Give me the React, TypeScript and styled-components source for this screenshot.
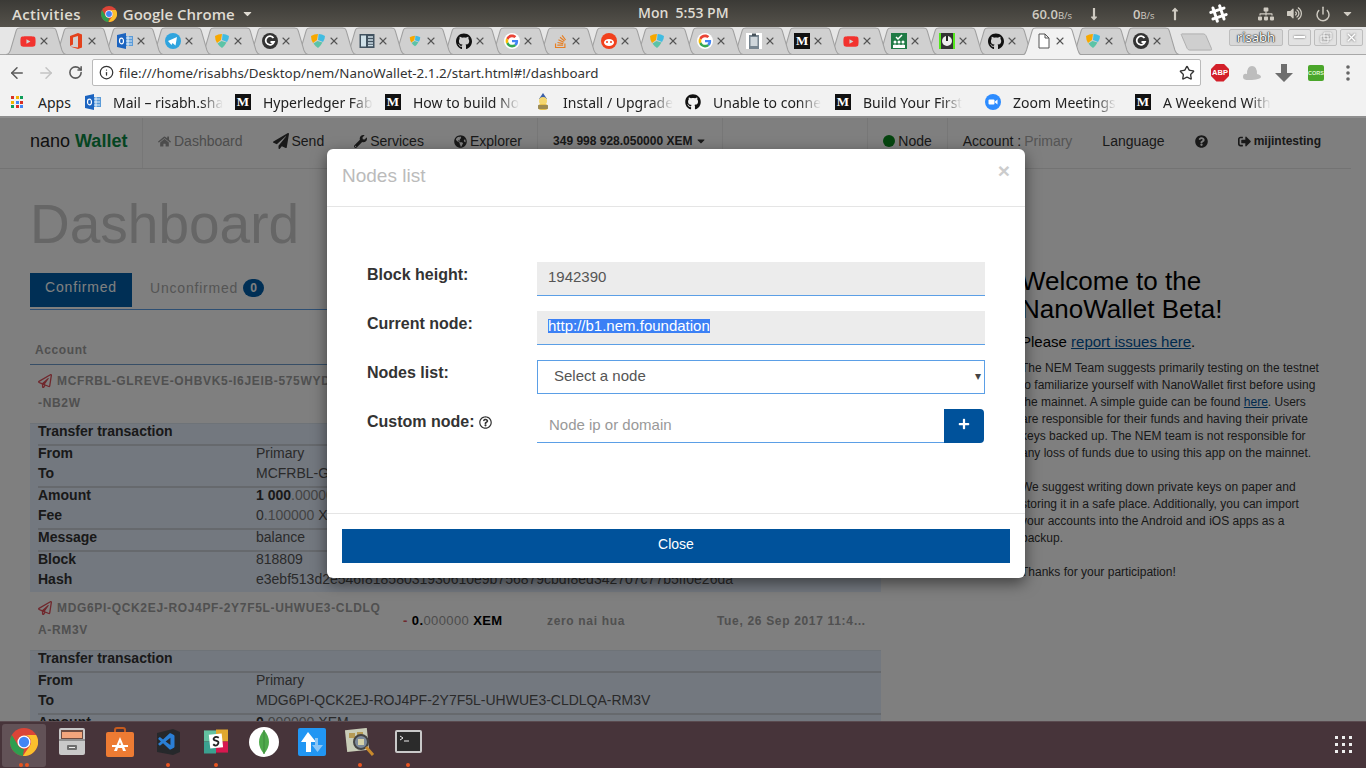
import { FC, ReactNode } from 'react';
import styled, { createGlobalStyle } from 'styled-components';
import { ArrowLeft, ArrowRight, Info, Power, RotateCw, Star, X } from 'lucide-react';
import {
    FaGithub, FaGlobeAmericas, FaHome, FaPaperPlane, FaPlus, FaQuestionCircle,
    FaRegPaperPlane, FaRegQuestionCircle, FaSignOutAlt, FaSlackHash, FaStackOverflow,
    FaWrench, FaYoutube, FaCaretDown, FaLongArrowAltDown, FaLongArrowAltUp, FaVolumeUp,
    FaSitemap,
} from 'react-icons/fa';
import { VscVscode } from 'react-icons/vsc';

const GlobalStyle = createGlobalStyle`
    html, body { margin: 0; padding: 0; overflow: hidden; background: #808080; }
    * { box-sizing: border-box; }
    body { font-family: "Liberation Sans", Arial, sans-serif; }
`;

const Screen = styled.div`
    width: 1366px;
    height: 768px;
    display: flex;
    flex-direction: column;
    overflow: hidden;
`;

/* ---------- gnome panel ---------- */

const Panel = styled.div`
    height: 27px;
    flex: none;
    display: flex;
    align-items: center;
    position: relative;
    padding-left: 12px;
    background: linear-gradient(#3b3a36, #55524b);
    color: #dfdbd2;
    font: 600 15px "Open Sans", "Noto Sans", sans-serif;
    letter-spacing: 0.3px;
`;

const PanelApp = styled.div`
    display: flex;
    align-items: center;
    margin-left: 20px;
    gap: 6px;
    letter-spacing: 0;
`;

const Clock = styled.div`
    position: absolute;
    left: 638px;
    top: 3px;
    font-size: 14px;
    letter-spacing: 0;
`;

const PanelTray = styled.div`
    margin-left: auto;
    width: 334px;
    display: grid;
    grid-template-columns: 55px 46px 35px 40px 50px 29px 28px 26px 25px;
    align-items: center;
    justify-items: start;
    color: #cfcbc2;
`;

const Speed = styled.span`
    font-size: 13px;
    letter-spacing: 0;
    white-space: nowrap;
    & small { font-size: 9.5px; font-weight: 400; }
`;

/* ---------- chrome tabs ---------- */

const TabStrip = styled.div`
    height: 28px;
    flex: none;
    display: flex;
    padding-left: 6px;
    background: #e6e6e6;
    box-shadow: inset 0 -1px 0 #a8a8a8;
    position: relative;
`;

const Tab = styled.div<{ $z: number }>`
    width: 60.4px;
    height: 28px;
    margin-right: -12px;
    flex: none;
    position: relative;
    z-index: ${(p) => p.$z};
    display: flex;
    align-items: center;
    padding: 0 0 0 14px;
    gap: 2px;
`;

const TabShape = styled.svg`
    position: absolute;
    left: 0;
    top: 0;
    width: 100%;
    height: 100%;
`;

const TabIconBox = styled.span`
    position: relative;
    width: 16px;
    height: 16px;
    flex: none;
    display: flex;
    align-items: center;
    justify-content: center;
`;

const TabClose = styled(X)`
    position: relative;
    flex: none;
    color: #555;
`;

const NewTab = styled.svg`
    flex: none;
    width: 34px;
    height: 18px;
    margin: 6px 0 0 13px;
`;

const WindowControls = styled.div`
    margin-left: auto;
    padding: 2px 3px 0 0;
    display: flex;
    gap: 3px;
    position: relative;
    z-index: 40;
`;

const ProfileChip = styled.div`
    width: 54px;
    height: 17px;
    margin-right: 2px;
    border: 1px solid #bdbdbd;
    border-radius: 2px;
    background: #d8d8d8;
    color: #fff;
    font: 13px "Noto Sans", sans-serif;
    line-height: 15px;
    text-align: center;
    text-shadow: 0 0 1px #111, 0 0 1px #111, 0 0 2px #333;
`;

const WindowButton = styled.div`
    width: 23px;
    height: 17px;
    border: 1px solid #bdbdbd;
    border-radius: 2px;
    background: #e2e2e2;
    color: #fff;
    display: flex;
    align-items: center;
    justify-content: center;
    & svg { filter: drop-shadow(0 0 1px #666); }
`;

/* ---------- chrome toolbar ---------- */

const Toolbar = styled.div`
    height: 35px;
    flex: none;
    display: flex;
    align-items: center;
    background: #f2f2f2;
    padding: 0 0 0 8px;
    color: #5a5a5a;
`;

const ToolButton = styled.span<{ $faded?: boolean }>`
    width: 18px;
    margin-right: 11px;
    display: flex;
    justify-content: center;
    flex: none;
    color: ${(p) => (p.$faded ? '#c4c4c4' : '#5a5a5a')};
`;

const Omnibox = styled.div`
    width: 1109px;
    height: 27px;
    margin-left: -3px;
    flex: none;
    display: flex;
    align-items: center;
    padding: 0 5px 0 6px;
    gap: 5px;
    background: #fff;
    border: 1px solid #bababa;
    border-radius: 2px;
    font: 13.4px "Noto Sans", sans-serif;
    color: #333;
`;

const Url = styled.span`
    flex: 1;
    white-space: nowrap;
`;

const Extensions = styled.div`
    display: grid;
    grid-template-columns: repeat(5, 32px);
    justify-items: center;
    align-items: center;
    margin-left: 3px;
`;

const AbpBadge = styled.span`
    width: 18px;
    height: 18px;
    background: #d3202a;
    clip-path: polygon(30% 0, 70% 0, 100% 30%, 100% 70%, 70% 100%, 30% 100%, 0 70%, 0 30%);
    color: #fff;
    font: bold 7.5px/18px "Liberation Sans", sans-serif;
    text-align: center;
`;

const CorsBadge = styled.span`
    width: 16px;
    height: 16px;
    background: #4aa62a;
    border-radius: 2px;
    color: #dff5d0;
    font: bold 5.5px/16px "Liberation Sans", sans-serif;
    text-align: center;
`;

/* ---------- bookmarks ---------- */

const BookmarkBar = styled.div`
    height: 28px;
    flex: none;
    display: flex;
    align-items: center;
    padding: 0 0 2px 11px;
    background: #f2f2f2;
    border-bottom: 2px solid #8f8f8f;
    font: 14px "Noto Sans", sans-serif;
    color: #222;
`;

const Bookmark = styled.div<{ $w: number }>`
    width: ${(p) => p.$w}px;
    flex: none;
    display: flex;
    align-items: center;
    gap: 12px;
`;

const BookmarkLabel = styled.span<{ $fade?: boolean }>`
    white-space: nowrap;
    ${(p) => p.$fade && 'mask-image: linear-gradient(90deg, #000 80%, transparent 100%);'}
`;

const AppsGrid = styled.span`
    width: 12px;
    height: 12px;
    margin-right: 3px;
    display: grid;
    grid-template-columns: repeat(3, 3px);
    grid-auto-rows: 3px;
    gap: 1.5px;
`;

const AppsDot = styled.i<{ $c: string }>`
    background: ${(p) => p.$c};
`;

const MediumMark = styled.span`
    width: 16px;
    height: 16px;
    flex: none;
    background: #111;
    color: #fff;
    font: bold 13px/16px "Liberation Serif", serif;
    text-align: center;
`;

/* ---------- page in the browser ---------- */

const Viewport = styled.div`
    height: 603px;
    flex: none;
    position: relative;
    overflow: hidden;
    background: #fff;
`;

const Navbar = styled.nav`
    width: 1351px;
    height: 51px;
    padding-right: 15px;
    display: flex;
    border-bottom: 1px solid #e6e6e6;
    font-size: 14px;
    color: #333;
`;

const Brand = styled.div`
    width: 143px;
    padding-left: 30px;
    font-size: 18px;
    line-height: 47px;
    color: #222;
    border-right: 1px solid #eee;
    & b { color: #0b8a45; }
`;

const NavItem = styled.div<{ $muted?: boolean; $bold?: boolean; $divider?: boolean; $push?: boolean }>`
    padding: 0 15px;
    display: flex;
    align-items: center;
    gap: 3px;
    height: 46px;
    white-space: nowrap;
    color: ${(p) => (p.$muted ? '#999' : '#333')};
    font-weight: ${(p) => (p.$bold ? 700 : 400)};
    font-size: ${(p) => (p.$bold ? '12px' : '14px')};
    ${(p) => p.$divider && 'border-left: 1px solid #eee; border-right: 1px solid #eee;'}
    ${(p) => p.$push && 'margin-left: auto;'}
    & em { font-style: normal; color: #aaa; }
`;

const NodeDot = styled.span`
    width: 12px;
    height: 12px;
    border-radius: 50%;
    background: #0a8a1e;
`;

const Main = styled.div`
    display: flex;
    padding-left: 30px;
`;

const LeftColumn = styled.div`
    width: 851px;
    flex: none;
`;

const PageTitle = styled.h1`
    margin: 25px 0 19px;
    font-size: 55px;
    line-height: 60px;
    font-weight: 400;
    color: #ccc;
`;

const TabsRow = styled.div`
    display: flex;
    height: 37px;
    border-bottom: 1px solid #5d9fe6;
    padding-bottom: 2px;
    font-size: 14px;
    letter-spacing: 0.8px;
    line-height: 28px;
`;

const ConfirmedTab = styled.div`
    width: 102px;
    text-align: center;
    background: #005fab;
    color: #fff;
`;

const UnconfirmedTab = styled.div`
    margin-left: 18px;
    display: flex;
    align-items: center;
    gap: 5px;
    color: #aaa;
    height: 30px;
`;

const CountBadge = styled.span`
    width: 21px;
    height: 18px;
    border-radius: 9px;
    background: #005fab;
    color: #fff;
    font: bold 12px/18px "Liberation Sans", sans-serif;
    letter-spacing: 0;
    text-align: center;
`;

const TableHead = styled.div`
    height: 55px;
    padding: 33px 0 0 5px;
    border-bottom: 1px solid #6f9ccd;
    font-size: 12px;
    line-height: 14px;
    font-weight: 700;
    letter-spacing: 0.6px;
    color: #a0a0a0;
`;

const TxRow = styled.div`
    height: 58px;
    display: grid;
    grid-template-columns: 365px 144px 170px 172px;
    align-items: center;
    font-size: 12px;
    font-weight: 700;
    letter-spacing: 0.67px;
    color: #a0a0a0;
`;

const TxAddress = styled.div`
    display: flex;
    flex-direction: column;
    padding: 0 0 4px 8px;
    line-height: 22px;
    white-space: nowrap;
`;

const TxLine = styled.span`
    display: flex;
    align-items: center;
    gap: 5px;
    & svg { color: #e0505a; flex: none; }
`;

const TxCell = styled.div`
    padding-left: 8px;
    white-space: nowrap;
    overflow: hidden;
`;

const TxDate = styled(TxCell)`
    width: 158px;
    text-overflow: ellipsis;
`;

const AmountText = styled.span`
    display: block;
    padding-bottom: 2px;
    color: #000;
    font-size: 13px;
    letter-spacing: 0.4px;
    & i { font-style: normal; color: #e0505a; }
    & em { font-style: normal; font-weight: 400; color: #999; }
`;

const DetailBlock = styled.div`
    padding-left: 8px;
    background: #e6f0ff;
    border-top: 1px solid #dde6f0;
    font-size: 14px;
    color: #555;
`;

const DetailHead = styled.div`
    height: 20px;
    line-height: 14px;
    font-weight: 700;
    color: #333;
`;

const DetailSection = styled.div`
    border-top: 2px solid #ccd3da;
`;

const DetailRow = styled.div`
    height: 20px;
    line-height: 14px;
    display: grid;
    grid-template-columns: 218px 1fr;
    white-space: nowrap;
    & b { color: #333; }
    & strong { color: #333; }
`;

const FaintDigits = styled.span`
    color: #888;
`;

const RightColumn = styled.aside`
    width: 300px;
    margin-left: 140px;
    padding-top: 98px;
    color: #333;
    font-size: 12px;
    line-height: 17px;
    & a { color: #00549c; text-decoration: underline; }
`;

const WelcomeTitle = styled.h2`
    margin: 0;
    font-size: 26px;
    line-height: 28px;
    font-weight: 400;
    color: #000;
`;

const ReportLine = styled.p`
    margin: 9px 0 8px;
    font-size: 15px;
    line-height: 20px;
    color: #000;
`;

const Notes = styled.p`
    margin: 0 0 17px;
`;

/* ---------- modal ---------- */

const Backdrop = styled.div`
    position: absolute;
    inset: 0;
    background: rgba(0, 0, 0, 0.5);
`;

const Modal = styled.div`
    position: absolute;
    left: 327px;
    top: 31px;
    width: 698px;
    height: 429px;
    background: #fff;
    border-radius: 6px;
    box-shadow: 0 5px 15px rgba(0, 0, 0, 0.5);
    display: flex;
    flex-direction: column;
`;

const ModalHeader = styled.div`
    height: 58px;
    flex: none;
    display: flex;
    justify-content: space-between;
    padding: 15px 15px 0;
    border-bottom: 1px solid #e5e5e5;
`;

const ModalTitle = styled.div`
    font-size: 19px;
    line-height: 23px;
    color: #bbb;
`;

const CloseCross = styled.div`
    font-size: 21px;
    font-weight: 700;
    line-height: 14px;
    color: #ccc;
`;

const ModalBody = styled.div`
    height: 306px;
    flex: none;
    padding: 55px 40px 0;
    display: flex;
    flex-direction: column;
    gap: 15px;
`;

const FormRow = styled.div`
    display: grid;
    grid-template-columns: 170px 448px;
    height: 34px;
`;

const FieldLabel = styled.label`
    display: flex;
    align-items: center;
    gap: 4px;
    height: 26px;
    font-size: 16px;
    font-weight: 700;
    color: #333;
    & svg { font-size: 13px; }
`;

const ReadOnlyField = styled.div`
    height: 34px;
    padding: 0 11px;
    background: #ececec;
    border-bottom: 1px solid #5b9fe6;
    font-size: 15px;
    line-height: 30px;
    color: #555;
`;

const SelectedText = styled.span`
    display: inline-block;
    background: #3b80f5;
    color: #fff;
    line-height: 14px;
`;

const SelectBox = styled.div`
    position: relative;
    height: 34px;
    &::after {
        content: '▾';
        position: absolute;
        right: 4px;
        top: 7px;
        font-size: 12px;
        line-height: 18px;
        color: #444;
        pointer-events: none;
    }
`;

const NodeSelect = styled.select`
    appearance: none;
    width: 100%;
    height: 34px;
    padding: 0 12px 4px 16px;
    background: #fff;
    border: 1px solid #5b9fe6;
    border-radius: 0;
    font: 15px "Liberation Sans", sans-serif;
    color: #555;
    outline: none;
`;

const CustomNode = styled.div`
    display: flex;
    height: 34px;
`;

const NodeInput = styled.input`
    flex: 1;
    min-width: 0;
    padding: 0 12px 2px;
    border: 0;
    border-bottom: 1px solid #5b9fe6;
    outline: none;
    font: 15px "Liberation Sans", sans-serif;
    color: #555;
    &::placeholder { color: #999; opacity: 1; }
`;

const AddButton = styled.button`
    width: 40px;
    margin-right: 1px;
    border: 0;
    border-radius: 0 4px 4px 0;
    background: #00529b;
    color: #fff;
    display: flex;
    align-items: center;
    justify-content: center;
    padding: 0 0 4px;
    font-size: 12px;
`;

const ModalFooter = styled.div`
    flex: 1;
    padding: 15px 15px 0;
    border-top: 1px solid #e5e5e5;
`;

const CloseButton = styled.button`
    display: block;
    width: 100%;
    height: 34px;
    border: 0;
    padding: 0 0 4px;
    background: #00529b;
    color: #fff;
    font: 14px "Liberation Sans", sans-serif;
`;

/* ---------- dock ---------- */

const Dock = styled.div`
    height: 47px;
    flex: none;
    position: relative;
    display: flex;
    background: #47343a;
    border-top: 1px solid #5a4a4f;
`;

const DockItem = styled.div<{ $active?: boolean }>`
    width: 48px;
    height: 46px;
    position: relative;
    display: flex;
    align-items: center;
    justify-content: center;
    padding-bottom: 7px;
    &::before {
        content: '';
        position: absolute;
        inset: 2px 2px 1px 2px;
        border-radius: 3px;
        background: ${(p) => (p.$active ? 'rgba(255,255,255,0.15)' : 'transparent')};
    }
    & > svg { position: relative; }
`;

const DockDots = styled.div`
    position: absolute;
    left: 0;
    right: 0;
    bottom: 1px;
    display: flex;
    justify-content: center;
    gap: 2px;
`;

const DockDot = styled.i`
    width: 4px;
    height: 4px;
    border-radius: 50%;
    background: #e95420;
`;

const AppGrid = styled.div`
    position: absolute;
    right: 14px;
    top: 14px;
    display: grid;
    grid-template-columns: repeat(3, 3px);
    gap: 4px;
`;

const AppGridDot = styled.i`
    width: 3px;
    height: 3px;
    background: #eee;
`;

/* ---------- drawings ---------- */

const ChromeLogo: FC<{ size: number }> = ({ size }) => (
    <svg width={size} height={size} viewBox="0 0 24 24">
        <circle cx="12" cy="12" r="12" fill="#db4437" />
        <path d="M22.4 6H12a6 6 0 0 1 5.2 9L11 24a12 12 0 0 0 11.4-18z" fill="#fbc02d" />
        <path d="M1.6 6 7 15a6 6 0 0 0 5 3l-1 6A12 12 0 0 1 1.6 6z" fill="#2e9e4f" />
        <circle cx="12" cy="12" r="5.6" fill="#fff" />
        <circle cx="12" cy="12" r="4.4" fill="#4285f4" />
    </svg>
);

const GoogleLogo = () => (
    <svg width="16" height="16" viewBox="-6 -6 60 60">
        <circle cx="24" cy="24" r="30" fill="#fff" />
        <path fill="#EA4335" d="M24 9.5c3.54 0 6.71 1.22 9.21 3.6l6.85-6.85C35.9 2.38 30.47 0 24 0 14.62 0 6.51 5.38 2.56 13.22l7.98 6.19C12.43 13.72 17.74 9.5 24 9.5z" />
        <path fill="#4285F4" d="M46.98 24.55c0-1.57-.15-3.09-.38-4.55H24v9.02h12.94c-.58 2.96-2.26 5.48-4.78 7.18l7.73 6c4.51-4.18 7.09-10.36 7.09-17.65z" />
        <path fill="#FBBC05" d="M10.53 28.59c-.48-1.45-.76-2.99-.76-4.59s.27-3.14.76-4.59l-7.98-6.19C.92 16.46 0 20.12 0 24c0 3.88.92 7.54 2.56 10.78l7.97-6.19z" />
        <path fill="#34A853" d="M24 48c6.48 0 11.93-2.13 15.89-5.81l-7.73-6c-2.15 1.45-4.92 2.3-8.16 2.3-6.26 0-11.57-4.22-13.47-9.91l-7.98 6.19C6.51 42.62 14.62 48 24 48z" />
    </svg>
);

const NemLogo: FC<{ size?: number }> = ({ size = 16 }) => (
    <svg width={size} height={size} viewBox="0 0 16 16">
        <path d="M1 3q3-2 7-2L7 7l-4 3Q1 7 1 3z" fill="#f7a800" />
        <path d="M8.6 1q3.4 0 6.4 2 0 3-2 6L8 7z" fill="#41bce1" />
        <path d="M3.5 10.5 7.5 8l5 1.5Q10.5 13 8 15 5 13 3.5 10.5z" fill="#5cc3a6" />
    </svg>
);

const GrammarlyLogo = () => (
    <svg width="16" height="16" viewBox="0 0 16 16">
        <circle cx="8" cy="8" r="8" fill="#333" />
        <path d="M11.5 5A4.3 4.3 0 1 0 12 9H8.5" fill="none" stroke="#fff" strokeWidth="1.8" />
    </svg>
);

const OutlookLogo = () => (
    <svg width="16" height="16" viewBox="0 0 16 16">
        <rect x="7" y="3" width="9" height="10" fill="#5b9bd8" />
        <path d="M8 5h7M8 8h7M8 11h7M11 3v10" stroke="#fff" strokeWidth=".8" />
        <path d="M0 2 9 0v16L0 14z" fill="#1c64c0" />
        <ellipse cx="4.5" cy="8" rx="2" ry="2.8" fill="none" stroke="#fff" strokeWidth="1.2" />
    </svg>
);

const OfficeLogo = () => (
    <svg width="16" height="16" viewBox="0 0 16 16">
        <path d="M2 3 10 0l4 1.5v13L10 16l-8-2.5 8 1V3L5 4.5v7L2 13z" fill="#e3411c" />
    </svg>
);

const YoutubeLogo = () => <FaYoutube size={17} color="#f2322e" />;

const BookLogo = () => (
    <svg width="16" height="16" viewBox="0 0 16 16">
        <rect x=".5" y="1" width="15" height="14" fill="#415260" />
        <rect x="2" y="2.5" width="5" height="11" fill="#cfe0e8" />
        <path d="M9 4h5M9 7h5M9 10h5M9 12.5h5" stroke="#cfe0e8" strokeWidth="1.4" />
    </svg>
);

const ClipboardLogo = () => (
    <svg width="16" height="16" viewBox="0 0 16 16">
        <rect width="16" height="16" fill="#fff" />
        <rect x="3" y="2" width="10" height="14" fill="#76848f" />
        <rect x="4.5" y="4" width="7" height="9" fill="#cfd6db" />
        <rect x="6" y="0.5" width="4" height="2.5" fill="#47525a" />
    </svg>
);

const MeetingLogo = () => (
    <svg width="16" height="16" viewBox="0 0 16 16">
        <rect width="16" height="16" fill="#1f7a45" />
        <path d="m5 4 2 2 4-4" fill="none" stroke="#fff" strokeWidth="1.5" />
        <circle cx="4" cy="9" r="1.5" fill="#fff" />
        <circle cx="8" cy="9" r="1.5" fill="#fff" />
        <circle cx="12" cy="9" r="1.5" fill="#fff" />
        <path d="M2 15v-3q2-1 4 0 2-1 4 0 2-1 4 0v3z" fill="#fff" />
    </svg>
);

const PowerLogo = () => (
    <svg width="16" height="16" viewBox="0 0 16 16">
        <rect width="16" height="16" fill="#52e81c" />
        <rect x="2" width="12" height="16" fill="#333" />
        <circle cx="8" cy="8" r="5" fill="#eee" />
        <path d="M8 3v5" stroke="#222" strokeWidth="2" />
    </svg>
);

const FileLogo = () => (
    <svg width="16" height="16" viewBox="0 0 16 16">
        <path d="M3 1h6l4 4v10H3zM9 1v4h4" fill="#fff" stroke="#555" />
    </svg>
);

const tabIcons: ReactNode[] = [
    <YoutubeLogo />,
    <OfficeLogo />,
    <OutlookLogo />,
    <svg width="16" height="16" viewBox="0 0 16 16"><circle cx="8" cy="8" r="8" fill="#2fa4de" /><path d="m3 8 9-4-1.5 8.5L7.5 10 6.5 12z" fill="#fff" /></svg>,
    <NemLogo />,
    <GrammarlyLogo />,
    <NemLogo />,
    <BookLogo />,
    <NemLogo size={12} />,
    <FaGithub size={17} color="#111" />,
    <GoogleLogo />,
    <FaStackOverflow size={15} color="#e67e22" />,
    <svg width="16" height="16" viewBox="0 0 16 16"><circle cx="8" cy="8" r="8" fill="#f1401c" /><ellipse cx="8" cy="9.5" rx="5" ry="3.5" fill="#fff" /><circle cx="6" cy="9" r="1" fill="#f1401c" /><circle cx="10" cy="9" r="1" fill="#f1401c" /></svg>,
    <NemLogo />,
    <GoogleLogo />,
    <ClipboardLogo />,
    <MediumMark>M</MediumMark>,
    <YoutubeLogo />,
    <MeetingLogo />,
    <PowerLogo />,
    <FaGithub size={17} color="#111" />,
    <FileLogo />,
    <NemLogo />,
    <GrammarlyLogo />,
];

const ACTIVE_TAB = 21;

const BeeLogo = () => (
    <svg width="16" height="18" viewBox="0 0 16 18">
        <path d="M4 6 8 0l4 6z" fill="#3b5fa8" />
        <circle cx="8" cy="8" r="4" fill="#f5d76e" />
        <rect x="3" y="11" width="10" height="6" rx="3" fill="#e8c14a" />
        <path d="M3 13h10M3 15h10" stroke="#555" />
    </svg>
);

const ZoomLogo = () => (
    <svg width="16" height="16" viewBox="0 0 16 16">
        <circle cx="8" cy="8" r="8" fill="#2d8cff" />
        <rect x="3.5" y="5.5" width="6" height="5" rx="1" fill="#fff" />
        <path d="m10 7.5 2.5-2v5L10 8.5z" fill="#fff" />
    </svg>
);

const bookmarks: { icon: ReactNode; label: string }[] = [
    { icon: <OutlookLogo />, label: 'Mail – risabh.sha' },
    { icon: <MediumMark>M</MediumMark>, label: 'Hyperledger Fab' },
    { icon: <MediumMark>M</MediumMark>, label: 'How to build No' },
    { icon: <BeeLogo />, label: 'Install / Upgrade' },
    { icon: <FaGithub size={16} color="#111" />, label: 'Unable to conne' },
    { icon: <MediumMark>M</MediumMark>, label: 'Build Your First' },
    { icon: <ZoomLogo />, label: 'Zoom Meetings' },
    { icon: <MediumMark>M</MediumMark>, label: 'A Weekend With' },
];

const appsColors = ['#d93025', '#f4b400', '#0f9d58', '#f4b400', '#4285f4', '#d93025', '#0f9d58', '#d93025', '#4285f4'];

const dockApps: { icon: ReactNode; dots: number; active?: boolean }[] = [
    { icon: <ChromeLogo size={28} />, dots: 2, active: true },
    {
        icon: (
            <svg width="26" height="27" viewBox="0 0 26 27">
                <rect width="26" height="27" rx="2" fill="#c9c9c9" />
                <rect x="2" y="2" width="22" height="9" fill="#6d4c41" />
                <rect x="3" y="4" width="20" height="6" fill="#f2a57c" />
                <rect y="11" width="26" height="2" fill="#8f8f8f" />
                <rect x="8" y="17" width="10" height="5" rx="1" fill="#6e6e6e" />
                <rect x="10" y="19" width="6" height="1" fill="#eee" />
            </svg>
        ),
        dots: 0,
    },
    {
        icon: (
            <svg width="28" height="30" viewBox="0 0 28 30">
                <path d="M9 6V3q0-2 2-2h6q2 0 2 2v3" fill="none" stroke="#c75b1e" strokeWidth="2" />
                <rect y="5" width="28" height="25" rx="2" fill="#ed7b33" />
                <path d="m14 10 6 14h-3l-1-3h-4l-1 3H8zM13 18h2l-1-3z" fill="#fff" />
                <rect x="6" y="18" width="16" height="2" fill="#fff" />
            </svg>
        ),
        dots: 0,
    },
    {
        icon: (
            <svg width="25" height="26" viewBox="0 0 25 26">
                <path d="M1 4 17 0l7 3v20l-7 3-16-3z" fill="#26282b" />
                <foreignObject x="1" y="3" width="20" height="20">
                    <VscVscode size={20} color="#2a7fd5" />
                </foreignObject>
            </svg>
        ),
        dots: 1,
    },
    {
        icon: (
            <svg width="24" height="25" viewBox="0 0 26 26">
                <path d="M0 1h13v12H0z" fill="#63c1a0" />
                <path d="M13 0h13v13H13z" fill="#e0a82e" />
                <path d="M0 13h13v13H0z" fill="#3ba190" />
                <path d="M13 13h13v12H13z" fill="#d7184f" />
                <rect x="6" y="5" width="14" height="15" fill="#fff" transform="rotate(-6 13 13)" />
                <path d="M16 9q-3-2-5 0t2 3 2 4-5 0" fill="none" stroke="#222" strokeWidth="2" />
            </svg>
        ),
        dots: 1,
    },
    {
        icon: (
            <svg width="30" height="30" viewBox="0 0 30 30">
                <circle cx="15" cy="15" r="15" fill="#fff" />
                <path d="M15 3q5 6 5 12t-5 12q-5-6-5-12t5-12z" fill="#4ea94b" />
                <path d="M15 3v24" stroke="#3d8a3c" />
            </svg>
        ),
        dots: 0,
    },
    {
        icon: (
            <svg width="28" height="28" viewBox="0 0 28 28">
                <rect width="28" height="28" rx="2" fill="#2196f3" />
                <path d="M10 4 18 14h-5v10H8V14H3z" fill="#fff" />
                <path d="M20 10v7h5l-5.5 7-5.5-7h3v-7z" fill="#8cc6f5" />
            </svg>
        ),
        dots: 0,
    },
    {
        icon: (
            <svg width="30" height="28" viewBox="0 0 30 28">
                <rect x="1" y="1" width="22" height="22" fill="#c9cdb8" transform="rotate(-6 12 12)" />
                <path d="M4 5h6v5H4zM12 4h6v5h-6z" fill="#b59a54" />
                <circle cx="16" cy="14" r="7" fill="#7c8a9a" stroke="#444" strokeWidth="2" />
                <path d="M13 11h6v6h-6z" fill="#d6d2a8" />
                <path d="m21 19 7 8" stroke="#c98a2c" strokeWidth="3" />
            </svg>
        ),
        dots: 1,
    },
    {
        icon: (
            <svg width="27" height="23" viewBox="0 0 27 23">
                <rect width="27" height="23" rx="2" fill="#c9c9c9" />
                <rect x="2" y="2" width="23" height="19" fill="#2b2b2b" />
                <path d="m5 6 3 2-3 2" fill="none" stroke="#eee" />
                <path d="M9 11h5" stroke="#eee" />
            </svg>
        ),
        dots: 1,
    },
];

const DetailsOne = () => (
    <DetailBlock>
        <DetailHead>Transfer transaction</DetailHead>
        <DetailSection>
            <DetailRow><b>From</b><span>Primary</span></DetailRow>
            <DetailRow><b>To</b><span>MCFRBL-GLREVE-OHBVK5-I6JEIB-575WYD</span></DetailRow>
        </DetailSection>
        <DetailSection>
            <DetailRow><b>Amount</b><span><strong>1 000</strong><FaintDigits>.000000</FaintDigits> XEM</span></DetailRow>
            <DetailRow><b>Fee</b><span>0<FaintDigits>.100000</FaintDigits> XEM</span></DetailRow>
        </DetailSection>
        <DetailSection>
            <DetailRow><b>Message</b><span>balance</span></DetailRow>
        </DetailSection>
        <DetailSection>
            <DetailRow><b>Block</b><span>818809</span></DetailRow>
            <DetailRow><b>Hash</b><span>e3ebf513d2e546f81858031930610e9b756879cbdf8ed342707c77b5ff0e26da</span></DetailRow>
        </DetailSection>
    </DetailBlock>
);

const DetailsTwo = () => (
    <DetailBlock>
        <DetailHead>Transfer transaction</DetailHead>
        <DetailSection>
            <DetailRow><b>From</b><span>Primary</span></DetailRow>
            <DetailRow><b>To</b><span>MDG6PI-QCK2EJ-ROJ4PF-2Y7F5L-UHWUE3-CLDLQA-RM3V</span></DetailRow>
        </DetailSection>
        <DetailSection>
            <DetailRow><b>Amount</b><span><strong>0</strong><FaintDigits>.000000</FaintDigits> XEM</span></DetailRow>
        </DetailSection>
    </DetailBlock>
);

export default function App() {
    return (
        <Screen>
            <GlobalStyle />
            <Panel>
                <span>Activities</span>
                <PanelApp>
                    <ChromeLogo size={16} />
                    <span>Google Chrome</span>
                    <FaCaretDown size={13} />
                </PanelApp>
                <Clock>Mon &nbsp;5:53 PM</Clock>
                <PanelTray>
                    <Speed>60.0<small>B/s</small></Speed>
                    <FaLongArrowAltDown size={14} />
                    <Speed>0<small>B/s</small></Speed>
                    <FaLongArrowAltUp size={14} />
                    <FaSlackHash size={21} color="#fff" />
                    <FaSitemap size={16} />
                    <FaVolumeUp size={15} />
                    <Power size={16} strokeWidth={2.2} />
                    <FaCaretDown size={13} />
                </PanelTray>
            </Panel>

            <TabStrip>
                {tabIcons.map((icon, i) => (
                    <Tab key={i} $z={i === ACTIVE_TAB ? 35 : 30 - i}>
                        <TabShape viewBox="0 0 60 28" preserveAspectRatio="none">
                            {i === ACTIVE_TAB ? (
                                <path d="M0 28c3 0 3.5-2 4.5-5L10 4c1-3 2-3 4-3h32c2 0 3 0 4 3l5.5 19c1 3 1.5 5 4.5 5" fill="#f2f2f2" stroke="#a0a0a0" />
                            ) : (
                                <path d="M0 27.5c3 0 3.5-2 4.5-4.5L10 4c1-3 2-3 4-3h32c2 0 3 0 4 3l5.5 19c1 2.5 1.5 4.5 4.5 4.5z" fill="#d0d0d0" stroke="#a0a0a0" />
                            )}
                        </TabShape>
                        <TabIconBox>{icon}</TabIconBox>
                        <TabClose size={12} strokeWidth={2.2} />
                    </Tab>
                ))}
                <NewTab viewBox="0 0 36 20">
                    <path d="M1 1h24q2 0 3 2l6 14q1 2-1 2H10q-2 0-3-2L1 3q-1-2 0-2z" fill="#cfcfcf" stroke="#aaa" />
                </NewTab>
                <WindowControls>
                    <ProfileChip>risabh</ProfileChip>
                    <WindowButton>
                        <svg width="11" height="3" viewBox="0 0 11 3"><rect width="11" height="2" fill="#fff" /></svg>
                    </WindowButton>
                    <WindowButton>
                        <svg width="12" height="11" viewBox="0 0 12 11"><path d="M4 1h7v6H4zM1 4h7v6H1z" fill="none" stroke="#fff" /></svg>
                    </WindowButton>
                    <WindowButton><X size={13} strokeWidth={2.5} /></WindowButton>
                </WindowControls>
            </TabStrip>

            <Toolbar>
                <ToolButton><ArrowLeft size={18} /></ToolButton>
                <ToolButton $faded><ArrowRight size={18} /></ToolButton>
                <ToolButton><RotateCw size={15} strokeWidth={2.5} /></ToolButton>
                <Omnibox>
                    <Info size={15} />
                    <Url>file:///home/risabhs/Desktop/nem/NanoWallet-2.1.2/start.html#!/dashboard</Url>
                    <Star size={16} strokeWidth={2} />
                </Omnibox>
                <Extensions>
                    <AbpBadge>ABP</AbpBadge>
                    <svg width="18" height="14" viewBox="0 0 18 14"><path d="M4 8Q4 0 9 0t5 8q4 1 4 3t-9 3-9-3 4-3z" fill="#bdbdbd" /></svg>
                    <svg width="18" height="18" viewBox="0 0 18 18"><path d="M6 0h6v9h6l-9 9-9-9h6z" fill="#6e6e6e" /></svg>
                    <CorsBadge>CORS</CorsBadge>
                    <svg width="4" height="16" viewBox="0 0 4 16"><circle cx="2" cy="2" r="1.8" fill="#666" /><circle cx="2" cy="8" r="1.8" fill="#666" /><circle cx="2" cy="14" r="1.8" fill="#666" /></svg>
                </Extensions>
            </Toolbar>

            <BookmarkBar>
                <Bookmark $w={74}>
                    <AppsGrid>
                        {appsColors.map((c, i) => <AppsDot key={i} $c={c} />)}
                    </AppsGrid>
                    <BookmarkLabel>Apps</BookmarkLabel>
                </Bookmark>
                {bookmarks.map((b) => (
                    <Bookmark key={b.label} $w={150}>
                        {b.icon}
                        <BookmarkLabel $fade>{b.label}</BookmarkLabel>
                    </Bookmark>
                ))}
            </BookmarkBar>

            <Viewport>
                <Navbar>
                    <Brand>nano <b>Wallet</b></Brand>
                    <NavItem $muted><FaHome size={13} /> Dashboard</NavItem>
                    <NavItem><FaPaperPlane size={16} /> Send</NavItem>
                    <NavItem><FaWrench size={13} /> Services</NavItem>
                    <NavItem><FaGlobeAmericas size={13} /> Explorer</NavItem>
                    <NavItem $bold $divider>349 998 928.050000 XEM <FaCaretDown size={12} /></NavItem>
                    <NavItem $divider $push><NodeDot /> Node</NavItem>
                    <NavItem>Account&nbsp;: <em>Primary</em></NavItem>
                    <NavItem>Language</NavItem>
                    <NavItem><FaQuestionCircle size={13} /></NavItem>
                    <NavItem $bold><FaSignOutAlt size={13} /> mijintesting</NavItem>
                </Navbar>
                <Main>
                    <LeftColumn>
                        <PageTitle>Dashboard</PageTitle>
                        <TabsRow>
                            <ConfirmedTab>Confirmed</ConfirmedTab>
                            <UnconfirmedTab>Unconfirmed <CountBadge>0</CountBadge></UnconfirmedTab>
                        </TabsRow>
                        <TableHead>Account</TableHead>
                        <TxRow>
                            <TxAddress>
                                <TxLine><FaRegPaperPlane size={14} /> MCFRBL-GLREVE-OHBVK5-I6JEIB-575WYD</TxLine>
                                <span>-NB2W</span>
                            </TxAddress>
                        </TxRow>
                        <DetailsOne />
                        <TxRow>
                            <TxAddress>
                                <TxLine><FaRegPaperPlane size={14} /> MDG6PI-QCK2EJ-ROJ4PF-2Y7F5L-UHWUE3-CLDLQ</TxLine>
                                <span>A-RM3V</span>
                            </TxAddress>
                            <TxCell>
                                <AmountText><i>-</i> 0.<em>000000</em> XEM</AmountText>
                            </TxCell>
                            <TxCell>zero nai hua</TxCell>
                            <TxDate>Tue, 26 Sep 2017 11:46:21</TxDate>
                        </TxRow>
                        <DetailsTwo />
                    </LeftColumn>
                    <RightColumn>
                        <WelcomeTitle>Welcome to the NanoWallet Beta!</WelcomeTitle>
                        <ReportLine>Please <a>report issues here</a>.</ReportLine>
                        <Notes>
                            The NEM Team suggests primarily testing on the testnet to familiarize yourself with
                            NanoWallet first before using the mainnet. A simple guide can be found <a>here</a>. Users
                            are responsible for their funds and having their private keys backed up. The NEM team is
                            not responsible for any loss of funds due to using this app on the mainnet.
                        </Notes>
                        <Notes>
                            We suggest writing down private keys on paper and storing it in a safe place. Additionally,
                            you can import your accounts into the Android and iOS apps as a backup.
                        </Notes>
                        <Notes>Thanks for your participation!</Notes>
                    </RightColumn>
                </Main>

                <Backdrop />
                <Modal>
                    <ModalHeader>
                        <ModalTitle>Nodes list</ModalTitle>
                        <CloseCross>×</CloseCross>
                    </ModalHeader>
                    <ModalBody>
                        <FormRow>
                            <FieldLabel>Block height:</FieldLabel>
                            <ReadOnlyField>1942390</ReadOnlyField>
                        </FormRow>
                        <FormRow>
                            <FieldLabel>Current node:</FieldLabel>
                            <ReadOnlyField><SelectedText>http://b1.nem.foundation</SelectedText></ReadOnlyField>
                        </FormRow>
                        <FormRow>
                            <FieldLabel>Nodes list:</FieldLabel>
                            <SelectBox>
                                <NodeSelect defaultValue="">
                                    <option value="">Select a node</option>
                                </NodeSelect>
                            </SelectBox>
                        </FormRow>
                        <FormRow>
                            <FieldLabel>Custom node: <FaRegQuestionCircle /></FieldLabel>
                            <CustomNode>
                                <NodeInput placeholder="Node ip or domain" />
                                <AddButton><FaPlus /></AddButton>
                            </CustomNode>
                        </FormRow>
                    </ModalBody>
                    <ModalFooter>
                        <CloseButton>Close</CloseButton>
                    </ModalFooter>
                </Modal>
            </Viewport>

            <Dock>
                {dockApps.map((app, i) => (
                    <DockItem key={i} $active={app.active}>
                        {app.icon}
                        <DockDots>
                            {Array.from({ length: app.dots }).map((_, d) => <DockDot key={d} />)}
                        </DockDots>
                    </DockItem>
                ))}
                <AppGrid>
                    {Array.from({ length: 9 }).map((_, i) => <AppGridDot key={i} />)}
                </AppGrid>
            </Dock>
        </Screen>
    );
}
